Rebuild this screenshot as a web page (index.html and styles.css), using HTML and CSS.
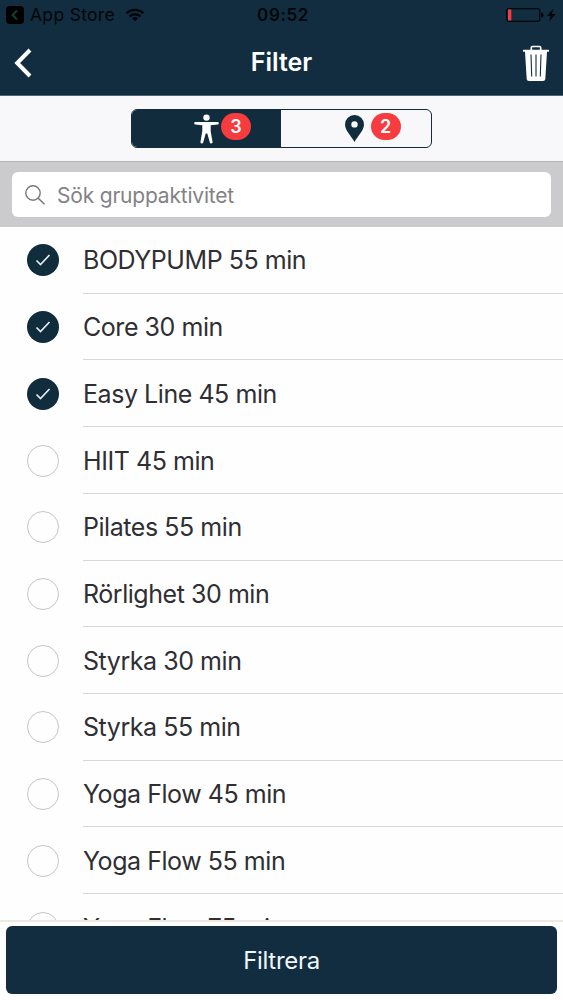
FILE: index.html
```html
<!DOCTYPE html>
<html lang="sv">
<head>
    <meta charset="UTF-8">
    <meta name="viewport" content="width=device-width, initial-scale=1.0">
    <title>Filter</title>
    <link rel="stylesheet" href="styles.css">
</head>
<body>
    <div class="app">
        <header class="header">
            <div class="status-bar">
                <div class="status-left">
                    <svg class="back-app" width="18" height="18" viewBox="0 0 18 18"><rect width="18" height="18" rx="4" fill="#000"/><path d="M11 4.500L6.500 9l4.500 4.500" fill="none" stroke="#173c33" stroke-width="2"/></svg>
                    <span class="app-store">App Store</span>
                    <svg class="wifi" width="20" height="14" viewBox="0 0 20 14"><path d="M1.500 5.200a12.500 12.500 0 0 1 17 0M4.600 8.300a8 8 0 0 1 10.800 0" fill="none" stroke="#020609" stroke-width="2.400"/><path d="M6.900 10.200a4.800 4.800 0 0 1 6.200 0L10 13.300z" fill="#020609"/></svg>
                </div>
                <span class="time">09:52</span>
                <div class="status-right">
                    <svg width="50" height="16" viewBox="0 0 50 16"><rect x=".7" y="1.700" width="33" height="12.600" rx="2" fill="none" stroke="#020609" stroke-width="1.200"/><rect x="2" y="2.500" width="3.300" height="11" fill="#f2403f"/><path d="M35 5.500q2.500 0 2.500 2.500t-2.500 2.500z" fill="#020609"/><path d="M47.500 1.500L41 9h3.600L43 14.500 49.500 7h-3.800z" fill="#020609"/></svg>
                </div>
            </div>
            <div class="nav-bar">
                <button type="button" class="nav-btn" aria-label="Tillbaka">
                    <svg width="18" height="30" viewBox="0 0 18 30"><path d="M16 2L3.200 15 16 28" fill="none" stroke="#fff" stroke-width="4"/></svg>
                </button>
                <h1>Filter</h1>
                <button type="button" class="nav-btn" aria-label="Rensa">
                    <svg width="26" height="36" viewBox="0 0 26 36"><path d="M8.300 5V2.800q0-1.300 1.300-1.300h6.800q1.300 0 1.300 1.300V5" fill="none" stroke="#fff" stroke-width="1.700"/><path d="M0 4.700h26v2.100h-2L22.300 34q-.1 2-2.300 2H6q-2.200 0-2.300-2L2 6.800H0z" fill="#fff"/><path d="M8 9.500l.7 22M13 9.500v22M18 9.500l-.7 22" fill="none" stroke="#122d3f" stroke-width="1.100"/></svg>
                </button>
            </div>
        </header>

        <div class="tabs">
            <div class="segmented">
                <button type="button" class="segment active" aria-label="Aktiviteter">
                    <svg width="25" height="30" viewBox="0 0 25 30"><circle cx="12.500" cy="3.600" r="3.200" fill="#fff"/><path d="M1.300 8h22.400q1.100 0 1.100 1.300t-1.100 1.300L16.700 11.200v6l1.900 11q.1 1.100-1.200 1.300t-1.600-.9L13.300 19.500h-1.600l-2.500 9.100q-.3 1.100-1.600.9t-1.200-1.300L8.300 17.200v-6L1.300 10.600q-1.100 0-1.100-1.300t1.100-1.300z" fill="#fff"/></svg>
                    <span class="badge">3</span>
                </button>
                <button type="button" class="segment" aria-label="Platser">
                    <svg width="19" height="27" viewBox="0 0 19 27"><path fill-rule="evenodd" d="M9.500 0A9.400 9.400 0 0 1 19 9.400C19 15.500 12.500 21 9.500 27 6.500 21 0 15.500 0 9.400A9.400 9.400 0 0 1 9.500 0zM9.500 6.200a3.200 3.200 0 1 0 0 6.400 3.200 3.200 0 0 0 0-6.400z" fill="#102c3d"/></svg>
                    <span class="badge">2</span>
                </button>
            </div>
        </div>

        <div class="search">
            <label class="search-box">
                <svg width="20" height="20" viewBox="0 0 20 20"><circle cx="8" cy="8" r="7.200" fill="none" stroke="#77777a" stroke-width="1.400"/><path d="M13 13l6.500 6.300" stroke="#77777a" stroke-width="1.600"/></svg>
                <input type="text" placeholder="Sök gruppaktivitet">
            </label>
        </div>

        <ul class="list">
            <li class="row"><span class="check checked"><svg width="16" height="12" viewBox="0 0 16 12"><path d="M1.500 6.500l4 4 9-9.500" fill="none" stroke="#e4edf6" stroke-width="1.700"/></svg></span><span class="name">BODYPUMP 55 min</span></li>
            <li class="row"><span class="check checked"><svg width="16" height="12" viewBox="0 0 16 12"><path d="M1.500 6.500l4 4 9-9.500" fill="none" stroke="#e4edf6" stroke-width="1.700"/></svg></span><span class="name">Core 30 min</span></li>
            <li class="row"><span class="check checked"><svg width="16" height="12" viewBox="0 0 16 12"><path d="M1.500 6.500l4 4 9-9.500" fill="none" stroke="#e4edf6" stroke-width="1.700"/></svg></span><span class="name">Easy Line 45 min</span></li>
            <li class="row"><span class="check"></span><span class="name">HIIT 45 min</span></li>
            <li class="row"><span class="check"></span><span class="name">Pilates 55 min</span></li>
            <li class="row"><span class="check"></span><span class="name">Rörlighet 30 min</span></li>
            <li class="row"><span class="check"></span><span class="name">Styrka 30 min</span></li>
            <li class="row"><span class="check"></span><span class="name">Styrka 55 min</span></li>
            <li class="row"><span class="check"></span><span class="name">Yoga Flow 45 min</span></li>
            <li class="row"><span class="check"></span><span class="name">Yoga Flow 55 min</span></li>
            <li class="row"><span class="check"></span><span class="name">Yoga Flow 75 min</span></li>
        </ul>

        <footer class="footer">
            <button type="button" class="submit-btn">Filtrera</button>
        </footer>
    </div>
</body>
</html>
```

FILE: styles.css
```css
* { box-sizing: border-box; }
body { margin: 0; font-family: Inter, "Liberation Sans", sans-serif; background: #fefefe; color: #2f2f33; }
button { padding: 0; border: none; background: none; font-family: inherit; cursor: pointer; }
svg { display: block; flex-shrink: 0; }
.app { display: flex; flex-direction: column; height: 1000px; overflow: hidden; }

.header { height: 96px; flex-shrink: 0; background: #122d3f; border-bottom: 1px solid #4c657a; }
.status-bar { display: grid; grid-template-columns: 1fr auto 1fr; align-items: center; height: 30px; padding: 0 7px 0 6px; color: #020609; }
.status-left { display: flex; align-items: center; }
.app-store { margin-left: 6px; padding-bottom: 1px; font-size: 17.500px; letter-spacing: 0.3px; }
.wifi { margin-left: 10px; }
.time { padding-left: 4px; font-size: 17px; font-weight: 600; letter-spacing: 0.6px; }
.status-right { display: flex; justify-content: flex-end; }
.nav-bar { display: grid; grid-template-columns: 1fr auto 1fr; align-items: center; height: 66px; padding: 0 14px; }
.nav-bar h1 { margin: 0; padding-bottom: 2px; color: #fff; font-size: 25px; font-weight: 600; }
.nav-btn { justify-self: start; }
.nav-btn:last-child { justify-self: end; }

.tabs { display: flex; justify-content: center; height: 65px; flex-shrink: 0; padding-top: 13px; background: #f8f8fa; }
.segmented { display: flex; width: 301px; height: 39px; border: 1.500px solid #102c3d; border-radius: 6px; overflow: hidden; }
.segment { display: flex; flex: 1; align-items: center; padding-left: 62px; }
.segment:last-child { padding-left: 63.500px; }
.segment.active { flex: 0 0 149px; background: #102c3d; }
.badge { display: flex; align-items: center; justify-content: center; width: 30px; height: 27px; margin: 0 0 4px 2px; border-radius: 14px; background: #f73c40; color: #fff; font-size: 18px; font-weight: 600; }
.segment:last-child .badge { margin-left: 7px; }

.search { height: 66px; flex-shrink: 0; padding: 10px 12px; background: #cbcbcd; border-top: 1px solid #b5b5b7; }
.search-box { display: flex; align-items: center; height: 45px; padding-left: 13px; border-radius: 6px; background: #fff; }
.search-box input { flex: 1; margin-left: 12px; padding: 1px 0 0; border: none; outline: none; background: none; font-family: inherit; font-size: 21px; letter-spacing: -0.2px; }
.search-box input::placeholder { color: #828285; opacity: 1; }

.list { flex: 1; min-height: 0; margin: 0; padding: 0; list-style: none; overflow: hidden; }
.row { display: flex; align-items: center; height: 66.720px; padding-left: 27px; }
.check { display: flex; align-items: center; justify-content: center; width: 32px; height: 32px; border: 1.500px solid #c6c6cb; border-radius: 50%; }
.check.checked { border: none; background: #102c3d; }
.name { display: flex; flex: 1; align-items: center; height: 100%; margin-left: 24px; padding-top: 1px; border-bottom: 1px solid #d8d8db; font-size: 25px; letter-spacing: -0.45px; }

.footer { height: 80px; flex-shrink: 0; padding: 4px 6px 6px; border-top: 2px solid #ebebe4; }
.submit-btn { width: 551px; height: 68px; padding-top: 1px; border-radius: 6px; background: #122d3f; color: #f0f6fa; font-size: 24px; letter-spacing: -0.3px; }
```
